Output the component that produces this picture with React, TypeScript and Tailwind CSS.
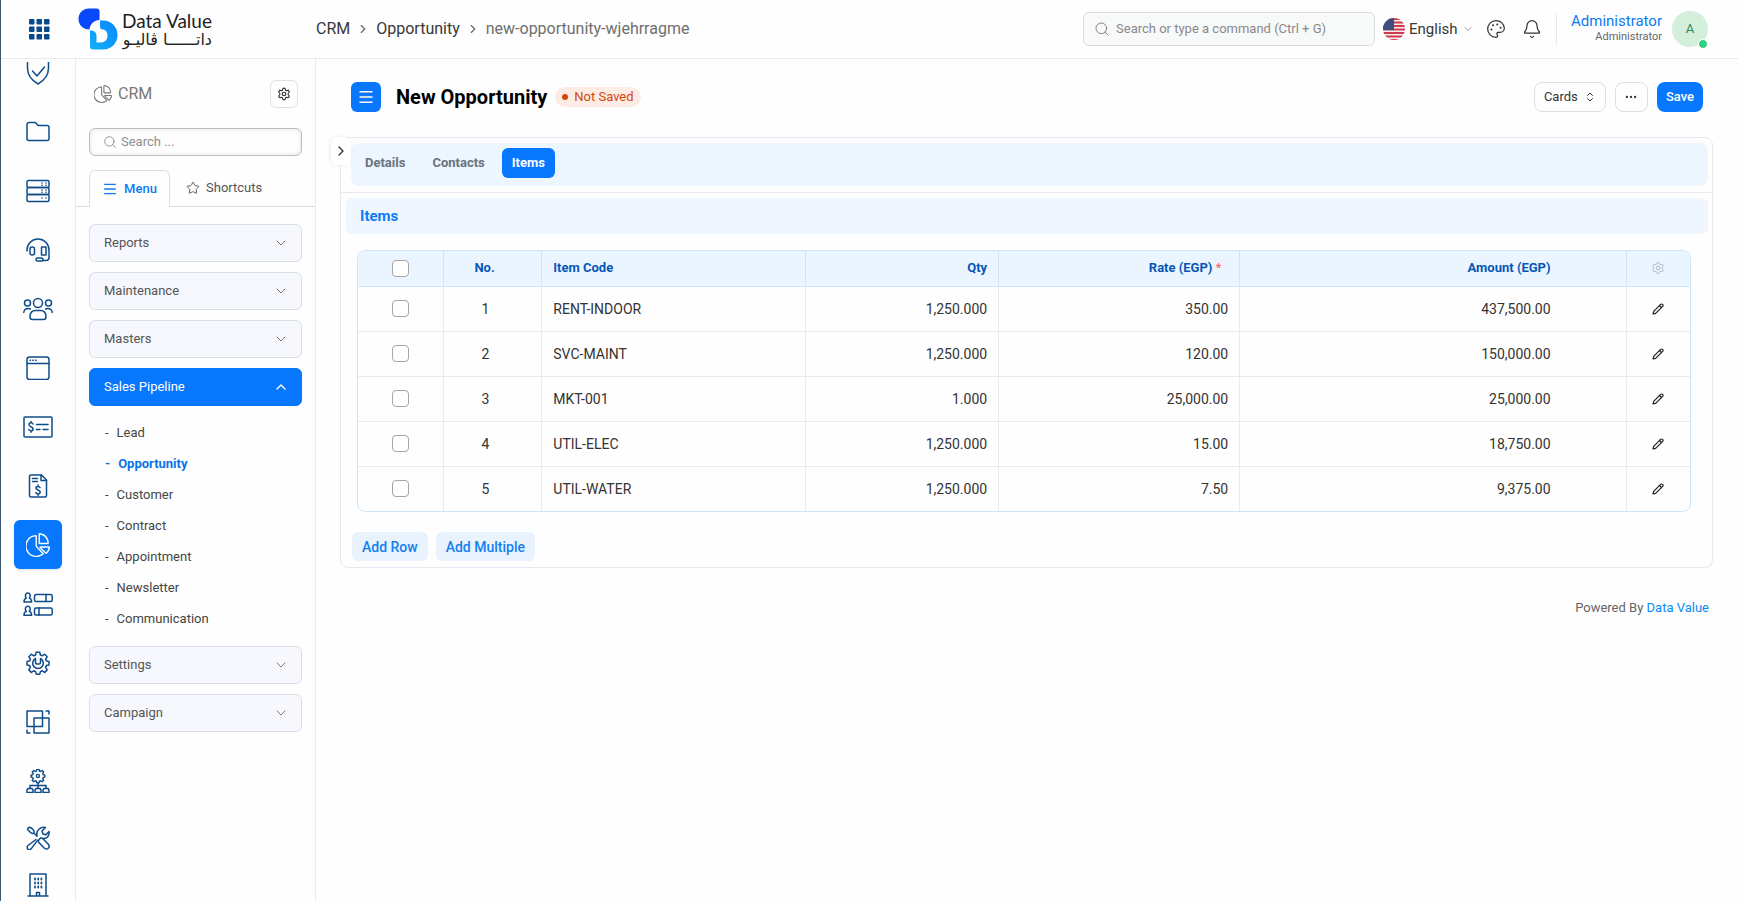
import React from "react";
import {
  Bell,
  ChevronDown,
  ChevronRight,
  ChevronUp,
  ChevronsUpDown,
  Ellipsis,
  Menu,
  Palette,
  Pencil,
  Search,
  Settings,
  Star,
} from "lucide-react";

interface IconProps {
  className?: string;
}

interface Item {
  no: number;
  code: string;
  qty: string;
  rate: string;
  amount: string;
}

interface RailIcon {
  label: string;
  icon: React.ReactNode;
  wide?: boolean;
  height?: string;
}

const items: Item[] = [
  { no: 1, code: "RENT-INDOOR", qty: "1,250.000", rate: "350.00", amount: "437,500.00" },
  { no: 2, code: "SVC-MAINT", qty: "1,250.000", rate: "120.00", amount: "150,000.00" },
  { no: 3, code: "MKT-001", qty: "1.000", rate: "25,000.00", amount: "25,000.00" },
  { no: 4, code: "UTIL-ELEC", qty: "1,250.000", rate: "15.00", amount: "18,750.00" },
  { no: 5, code: "UTIL-WATER", qty: "1,250.000", rate: "7.50", amount: "9,375.00" },
];

const pipelineLinks = ["Lead", "Opportunity", "Customer", "Contract", "Appointment", "Newsletter", "Communication"];

const railSvg = "fill-none stroke-current [stroke-linecap:round] [stroke-linejoin:round]";

const PieIcon: React.FC<IconProps> = ({ className = "size-6" }) => (
  <svg viewBox="0 0 24 24" strokeWidth="1.4" className={`${railSvg} ${className}`}>
    <path d="M9.6 2.6a10.4 10.4 0 1 0 7.6 18.2l-6.6-7.2a1.6 1.6 0 0 1-.4-1.1V3.2a.6.6 0 0 0-.6-.6Z" />
    <path d="M13.2 1.3v8.4c0 .5.3.8.8.8h7.6c.4 0 .7-.3.6-.7-.5-4.8-3.5-8.2-8.4-9-.3 0-.6.2-.6.5Z" />
    <path d="M14.6 14h8.3c.3 0 .5.3.5.6a9.5 9.5 0 0 1-2.9 5.5c-.2.2-.6.2-.8 0l-5.4-5.3c-.3-.3-.1-.8.3-.8Z" />
  </svg>
);

const GearShape = (
  <path d="M10.2 1.2h3.6l.6 2.8 1.8.8 2.5-1.6 2.5 2.5-1.6 2.5.8 1.8 2.6.4v3.6l-2.6.6-.8 1.8 1.6 2.5-2.5 2.5-2.5-1.6-1.8.8-.6 2.6h-3.6l-.6-2.6-1.8-.8-2.5 1.6-2.5-2.5 1.6-2.5-.8-1.8-2.6-.6v-3.6l2.6-.4.8-1.8-1.6-2.5 2.5-2.5 2.5 1.6 1.8-.8Z" />
);

const railIcons: RailIcon[] = [
  {
    label: "Quality",
    icon: (
      <>
        <path d="M1.5 0v7c0 8 4.5 12.5 10.5 16 6-3.5 10.5-8 10.5-16V0" />
        <path d="m6.5 10 4.5 5 7.5-9" />
      </>
    ),
  },
  { label: "Projects", icon: <path d="M1 18.500v-14A2 2 0 0 1 3 2.500h6.500L12 5.500h9a2 2 0 0 1 2 2v11a2 2 0 0 1-2 2H3a2 2 0 0 1-2-2Z" /> },
  {
    label: "Assets",
    icon: (
      <>
        <rect x="1" y="1.5" width="22" height="7" rx="1.5" />
        <rect x="1" y="8.5" width="22" height="7" rx="1.5" />
        <rect x="1" y="15.5" width="22" height="7" rx="1.5" />
        <path d="M16 4h.1M20 4h.1M16 6.300h.1M20 6.300h.1M16 11h.1M20 11h.1M16 13.300h.1M20 13.300h.1M16 19h.1M20 19h.1" />
      </>
    ),
  },
  {
    label: "Support",
    icon: (
      <>
        <path d="M1 13v-1a11 11 0 0 1 22 0v7.500a3 3 0 0 1-3 3h-3" />
        <rect x="4" y="9" width="4.5" height="8" rx="2" />
        <rect x="15.5" y="9" width="4.5" height="8" />
        <rect x="10" y="20" width="7" height="3" rx="1.5" />
      </>
    ),
  },
  {
    label: "HR",
    wide: true,
    icon: (
      <>
        <circle cx="15" cy="6" r="4.5" />
        <circle cx="4.5" cy="6" r="3" />
        <circle cx="25.5" cy="6" r="3" />
        <path d="M9.500 22.500c-1.500 0-2.500-1-2.500-2.500 0-4 2-6.500 5.500-6.500h5c3.500 0 5.500 2.500 5.500 6.500 0 1.500-1 2.500-2.500 2.500Z" />
        <path d="M.8 15.500c.2-2.500 2-4 4.500-4 .8 0 1.500.2 2 .5M29.200 15.500c-.2-2.500-2-4-4.500-4-.8 0-1.500.2-2 .5" />
      </>
    ),
  },
  {
    label: "Website",
    icon: (
      <>
        <rect x="1" y="1" width="22" height="22.5" rx="2.5" />
        <path d="M1 7.500h22M4 4.300h.5M6.800 4.300h.5M9.600 4.300h.5" />
      </>
    ),
  },
  {
    label: "Payments",
    wide: true,
    icon: (
      <>
        <rect x="1" y="2" width="28" height="20" rx="1" />
        <path d="M10 9c-.5-1-1.200-1.200-2-1.200-1.200 0-2 .7-2 1.800 0 2.600 4 1.600 4 4.300 0 1.200-.9 1.900-2 1.900-1 0-1.800-.4-2.200-1.300M8 6.500v1.300M8 15.800v1.400M13.500 9.500H25M13.500 14.500h3.500M20 14.500h5" />
      </>
    ),
  },
  {
    label: "Invoices",
    icon: (
      <>
        <path d="M3.500 21.500v-19a1.500 1.500 0 0 1 1.500-1.500h10.500l5 5v15.500a1.500 1.500 0 0 1-1.500 1.500H5a1.500 1.500 0 0 1-1.500-1.500Z" />
        <path d="M15 1v5.500h5.500M6.500 4.500h5M6.500 7.500h5" />
        <path d="M14 13.500c-.4-.8-1.100-1.100-2-1.100-1.200 0-2.100.6-2.100 1.700 0 2.400 4.300 1.400 4.300 4 0 1.100-1 1.800-2.200 1.800-1 0-1.800-.4-2.200-1.200M12 11v1.400M12 19.900v1.300" />
      </>
    ),
  },
  { label: "CRM", icon: null },
  {
    label: "Employees",
    wide: true,
    icon: (
      <>
        <path d="M3.300 6C1.500 4 2.500 1 4.800 1s3.300 3 1.500 5c1.500.5 2.300 2 2.300 4H1c0-2 .8-3.500 2.300-4Z" />
        <path d="M3.300 19.300c-1.800-2-.8-5 1.500-5s3.300 3 1.500 5c1.500.5 2.300 2 2.300 4H1c0-2 .8-3.500 2.300-4Z" />
        <rect x="11.5" y="2.5" width="17.7" height="7" rx="1.5" />
        <rect x="11.5" y="16" width="17.7" height="7" rx="1.5" />
        <path d="M23 2.500v7M16 16v7" />
      </>
    ),
  },
  {
    label: "Settings",
    icon: (
      <>
        {GearShape}
        <path d="M9.500 7.500a5.300 5.300 0 1 0 5 0v4a1.500 1.500 0 0 1-1.500 1.500h-2a1.500 1.500 0 0 1-1.500-1.500Z" />
      </>
    ),
  },
  {
    label: "Integrations",
    icon: (
      <>
        <path d="M1 1h15.500v15.500H1ZM8 8h15v15H8Z" />
        <path d="M20 1h3v3M1 20v3h3" />
      </>
    ),
  },
  {
    label: "Organization",
    icon: (
      <>
        <g transform="translate(4.500 -.5) scale(.62)" strokeWidth="2.3">
          {GearShape}
          <circle cx="12" cy="12" r="2.5" />
        </g>
        <path d="M12 14.500v5M4 19v-2.500h16V19" />
        <path d="M1 23.500v-2.500l1-1.500h4l1 1.500v2.500ZM9 23.500v-2.500l1-1.500h4l1 1.500v2.500ZM17 23.500v-2.500l1-1.500h4l1 1.500v2.500Z" />
      </>
    ),
  },
  {
    label: "Tools",
    height: "h-[45px]",
    icon: (
      <>
        <path d="M2 2.200c1.500-1.500 3-.8 4.500.8s2.300 3 1.300 4-2.500.3-4-1.300-3-2.300-1.800-3.500ZM7.800 7l3 3" />
        <path d="m10 13.500-8 6c-1.800 2-.5 4.500 1.500 4.200.8-.1 1.300-.6 2-1.300l6-8" />
        <path d="M13.500 13c1-1.200 2.500-1.200 3.500-.2l5.300 5.500c1 1.200 1 2.800 0 3.900s-2.700 1.100-3.800 0l-5.400-5.400c-.9-.9-.7-2.600.4-3.800Z" />
        <path d="M11 10c-1-4.500 2-9.500 8.500-8.500l-3.500 3.500 1 3 3 .8 3-3.300c.7 4-2 7.500-6 7" />
      </>
    ),
  },
  {
    label: "Buildings",
    height: "h-[29px]",
    icon: (
      <>
        <path d="M4 23V1h16v22M2 23h20M10.500 23v-3.500h3V23" />
        <path d="M9 5.500v1M12.200 5.500v1M15.400 5.500v1M9 9.500v1M12.200 9.500v1M15.400 9.500v1M9 13.500v1M12.200 13.500v1M15.400 13.500v1" strokeWidth="1.8" />
      </>
    ),
  },
];

const Logo: React.FC = () => (
  <a href="#" className="flex items-center gap-1 text-[#1f1f1f]">
    <svg viewBox="0 0 40 42" className="h-[42px] w-10">
      <defs>
        <linearGradient id="drop" x1="0" y1="1" x2="1" y2="0">
          <stop offset="0" stopColor="#12b0f8" />
          <stop offset="1" stopColor="#0a86ff" />
        </linearGradient>
      </defs>
      <path d="M11 .5h7.500a3 3 0 0 1 3 3V12c-5.500.3-9.500 4-10 9.500C5 21.500.5 17 .5 11S5 .5 11 .5Z" fill="#0847fb" />
      <path
        d="M22 12.500h3.500c8 0 14 6.500 14 14.500s-6 14.500-14 14.500H15a3 3 0 0 1-3-3V22.500c4 0 6.500 1.500 6.500 5.500v6.500H23c4 0 6.500-3 6.500-7s-2.500-6-5-6c-2 0-2.500-1.500-2.500-3.500Z"
        fill="url(#drop)"
      />
    </svg>
    <span className="flex flex-col pt-0.5 font-['Lato','Noto_Sans',sans-serif]">
      <span className="text-[19px] leading-5">Data Value</span>
      <span className="font-['DejaVu_Sans',sans-serif] text-base leading-[18px]" dir="rtl" lang="ar">
        داتــــــا ڤاليـو
      </span>
    </span>
  </a>
);

const Flag: React.FC = () => (
  <svg viewBox="0 0 22 22" className="size-[22px]">
    <clipPath id="round">
      <circle cx="11" cy="11" r="11" />
    </clipPath>
    <g clipPath="url(#round)">
      <rect width="22" height="22" fill="#f4f1f2" />
      <path d="M0 1h22M0 4.500h22M0 8h22M0 11.500h22M0 15h22M0 18.500h22M0 22h22" stroke="#cf3b4c" strokeWidth="1.8" />
      <rect width="11" height="12" fill="#3d4f7d" />
    </g>
  </svg>
);

const TopBar: React.FC = () => (
  <header className="mr-2 flex h-[59px] items-center border-b border-[#e9eaec] pr-[30px] pl-7">
    <button aria-label="Apps" className="mr-7">
      <svg viewBox="0 0 21 21" className="size-[21px] fill-[#0a4a8c]">
        {[0, 7.5, 15].map((y) => [0, 7.5, 15].map((x) => <rect key={`${x}-${y}`} x={x} y={y} width="5.5" height="5.5" rx="0.8" />))}
      </svg>
    </button>
    <Logo />
    <nav aria-label="Breadcrumb" className="ml-[104px] flex flex-1 items-center gap-1.5 text-base text-[#383838]">
      <a href="#">CRM</a>
      <ChevronRight className="size-3.5 text-[#666]" />
      <a href="#">Opportunity</a>
      <ChevronRight className="size-3.5 text-[#666]" />
      <span className="text-[#6f6f6f]">new-opportunity-wjehrragme</span>
    </nav>
    <label className="flex h-[34px] w-[292px] items-center gap-1.5 rounded-md border border-[#d9dcdf] bg-[#f8f9f9] px-2.5 text-[#7c7c7c]">
      <Search className="size-4" strokeWidth={1.4} />
      <input
        aria-label="Search"
        placeholder="Search or type a command (Ctrl + G)"
        className="flex-1 bg-transparent text-[13px] outline-none placeholder:text-[#8a8a8a]"
      />
    </label>
    <div className="ml-2 flex items-center gap-1">
      <Flag />
      <select aria-label="Language" className="appearance-none text-[15px] text-[#383838]">
        <option>English</option>
      </select>
      <ChevronDown className="size-3 text-[#777]" strokeWidth={1.5} />
    </div>
    <button aria-label="Theme" className="ml-3 text-[#333]">
      <Palette className="size-5" strokeWidth={1.5} />
    </button>
    <button aria-label="Notifications" className="ml-4 text-[#333]">
      <Bell className="size-5" strokeWidth={1.5} />
    </button>
    <div className="ml-3.5 flex items-center gap-2.5">
      <div className="border-l border-[#e5e7ea] pl-3.5 text-right">
        <a href="#" className="block text-[15px] leading-4 text-[#0b7cf5]">
          Administrator
        </a>
        <span className="block text-[11px] leading-4 text-[#666]">Administrator</span>
      </div>
      <div className="relative flex size-9 items-center justify-center rounded-full bg-[#d5efdd] text-[13px] text-[#2e8b57]">
        A
        <span className="absolute right-0 -bottom-0.5 size-2.5 rounded-full border border-white bg-[#35cf83]" />
      </div>
    </div>
  </header>
);

const Rail: React.FC = () => (
  <nav aria-label="Modules" className="flex w-[75px] shrink-0 flex-col overflow-hidden border-r border-[#e9eaec] pt-[3px] text-[#0f4c8a]">
    <div className="min-h-0 flex-1 overflow-hidden">
      <div className="-mt-3.5 flex flex-col items-center gap-2.5">
        {railIcons.map(({ label, icon, wide, height = "h-[49px]" }) =>
          icon ? (
            <a key={label} href="#" aria-label={label} className={`flex w-12 items-center justify-center ${height}`}>
              <svg viewBox={wide ? "0 0 30 24" : "0 0 24 24"} strokeWidth="1.5" className={`h-6 ${wide ? "w-[30px]" : "w-6"} ${railSvg}`}>
                {icon}
              </svg>
            </a>
          ) : (
            <a key={label} href="#" aria-label={label} className="flex h-[49px] w-12 items-center justify-center rounded-md bg-[#0777fd] text-white shadow">
              <PieIcon />
            </a>
          ),
        )}
      </div>
    </div>
  </nav>
);

const Section: React.FC<{ title: string; open?: boolean }> = ({ title, open }) => (
  <button
    aria-expanded={!!open}
    className={`flex h-[38px] w-full items-center justify-between rounded-md border pr-3 pl-3.5 text-[13px] ${
      open ? "border-[#0777fd] bg-[#0777fd] text-white" : "border-[#d9dee8] bg-[#f6f8fd] text-[#555]"
    }`}
  >
    {title}
    {open ? <ChevronUp className="size-4" /> : <ChevronDown className="size-4 text-[#777]" strokeWidth={1.5} />}
  </button>
);

const Sidebar: React.FC = () => (
  <aside className="w-[240px] shrink-0 border-r border-[#e9eaec]">
    <div className="flex items-center gap-1.5 pt-[21px] pr-[17px] pl-[18px] text-[#777]">
      <PieIcon className="size-[18px]" />
      <h2 className="flex-1 text-base">CRM</h2>
      <button aria-label="Sidebar settings" className="flex size-7 items-center justify-center rounded-md border border-[#dfe1e8] text-[#333]">
        <Settings className="size-3.5" />
      </button>
    </div>
    <div className="px-[13px] pt-5">
      <label className="flex h-7 items-center gap-1 rounded-md border border-[#bfbfbf] px-[13px] text-[#8a8a8a] shadow-[inset_0_0_4px_rgba(0,0,0,0.12)]">
        <Search className="size-3.5" strokeWidth={1.5} />
        <input aria-label="Search menu" placeholder="Search ..." className="min-w-0 flex-1 bg-transparent text-[13px] outline-none placeholder:text-[#8f8f8f]" />
      </label>
    </div>
    <div role="tablist" className="mt-3.5 flex border-b border-[#d9dde2] pl-[13px] text-[13px]">
      <button role="tab" aria-selected="true" className="-mb-px flex h-[37px] w-[81px] items-center justify-center gap-1.5 rounded-t-md border border-b-0 border-[#d9dde2] bg-[#fefefe] font-medium text-[#0b7cf5]">
        <Menu className="size-4" />
        Menu
      </button>
      <button role="tab" aria-selected="false" className="flex items-center gap-1.5 px-4 text-[#555]">
        <Star className="size-3.5" strokeWidth={1.6} />
        Shortcuts
      </button>
    </div>
    <div className="flex flex-col gap-2.5 px-[13px] pt-[17px]">
      <Section title="Reports" />
      <Section title="Maintenance" />
      <Section title="Masters" />
      <Section title="Sales Pipeline" open />
      <ul className="pt-px pb-0.5 pl-4 text-[13px]">
        {pipelineLinks.map((link) => (
          <li key={link} className="flex h-[31px] items-center">
            <a href="#" className={`flex gap-2 ${link === "Opportunity" ? "font-bold text-[#0b74e5]" : "text-[#444]"}`}>
              <span>-</span>
              {link}
            </a>
          </li>
        ))}
      </ul>
      <Section title="Settings" />
      <Section title="Campaign" />
    </div>
  </aside>
);

const Check: React.FC<{ label: string }> = ({ label }) => (
  <input type="checkbox" aria-label={label} className="mx-auto block size-[17px] appearance-none rounded border border-[#a5a5a5] bg-white checked:bg-[#0777fd]" />
);

const ItemsTable: React.FC = () => (
  <div className="mr-[21px] ml-4 overflow-hidden rounded-lg border border-[#cfe5fb]">
    <table className="w-full table-fixed text-sm text-[#333]">
      <colgroup>
        <col className="w-[6.4%]" />
        <col className="w-[7.4%]" />
        <col className="w-[19.8%]" />
        <col className="w-[14.5%]" />
        <col className="w-[18.1%]" />
        <col />
        <col className="w-[4.8%]" />
      </colgroup>
      <thead>
        <tr className="h-[35px] border-b border-[#cfe5fb] bg-[#ebf5ff] text-[13px] text-[#0757b5] [&>th+th]:border-l [&>th+th]:border-[#cfe5fb]">
          <th>
            <Check label="Select all" />
          </th>
          <th className="pr-4">No.</th>
          <th className="px-[11px] text-left">Item Code</th>
          <th className="px-[11px] text-right">Qty</th>
          <th className="px-[18px] text-right">
            Rate (EGP) <span className="font-normal text-[#ff5a5f]">*</span>
          </th>
          <th className="pr-[75px] text-right">Amount (EGP)</th>
          <th>
            <button aria-label="Configure columns" className="mx-auto block text-[#aab4be]">
              <Settings className="size-3.5" strokeWidth={1.5} />
            </button>
          </th>
        </tr>
      </thead>
      <tbody>
        {items.map((item) => (
          <tr key={item.no} className="h-[45px] border-b border-[#e8ebee] last:border-b-0 [&>td+td]:border-l [&>td+td]:border-[#e8ebee]">
            <td>
              <Check label={`Select row ${item.no}`} />
            </td>
            <td className="pr-3.5 text-center">{item.no}</td>
            <td className="px-[11px]">{item.code}</td>
            <td className="px-[11px] text-right">{item.qty}</td>
            <td className="px-[11px] text-right">{item.rate}</td>
            <td className="pr-[75px] text-right">{item.amount}</td>
            <td>
              <button aria-label={`Edit row ${item.no}`} className="mx-auto block text-[#222]">
                <Pencil className="size-3" strokeWidth={2.4} />
              </button>
            </td>
          </tr>
        ))}
      </tbody>
    </table>
  </div>
);

const formTabs = ["Details", "Contacts", "Items"];

const App: React.FC = () => {
  return (
    <div className="flex h-screen flex-col overflow-hidden border-l border-[#3f5a70] bg-[#fefefe] font-['Roboto','Noto_Sans',sans-serif]">
      <TopBar />
      <div className="flex min-h-0 flex-1">
        <Rail />
        <Sidebar />
        <main className="min-w-0 flex-1 pr-[33px] pl-6">
          <div className="flex items-center pt-[23px] pr-2.5 pl-[11px]">
            <button aria-label="Toggle sidebar" className="flex size-[30px] items-center justify-center rounded-md bg-[#0777fd] text-white">
              <Menu className="size-[18px]" strokeWidth={1.8} />
            </button>
            <h1 className="ml-[15px] text-xl font-bold text-black">New Opportunity</h1>
            <span className="ml-2 flex h-5 items-center gap-1.5 rounded-full bg-[#fdece4] px-[7px] text-[13px] text-[#d0480f]">
              <span className="size-1.5 rounded-full bg-[#d0480f]" />
              Not Saved
            </span>
            <div className="ml-auto flex items-center gap-[9px] text-[13px] text-[#333]">
              <div className="flex h-[30px] items-center gap-1.5 rounded-lg border border-[#dcdee6] px-[9px]">
                <select aria-label="View" className="appearance-none">
                  <option>Cards</option>
                </select>
                <ChevronsUpDown className="size-3" />
              </div>
              <button aria-label="More actions" className="flex h-[30px] w-[33px] items-center justify-center rounded-lg border border-[#dcdee6]">
                <Ellipsis className="size-3.5" />
              </button>
              <button className="h-[30px] rounded-lg bg-[#0777fd] px-[9px] font-medium text-white">Save</button>
            </div>
          </div>

          <section className="relative mt-[25px] rounded-lg border border-[#e7e9ec]">
            <button aria-label="Expand" className="absolute -top-px -left-2.5 flex h-7 w-5 items-center justify-center rounded-md bg-white text-[#333] shadow-[-1px_0_4px_rgba(0,0,0,0.08)]">
              <ChevronRight className="size-4" />
            </button>
            <div className="border-b border-[#e7e9ec] pt-[5px] pr-1 pb-1.5 pl-2.5">
              <div role="tablist" className="flex h-[43px] items-start gap-[7px] rounded-lg bg-[#edf5fe] px-1 pt-[5px] text-[13px] font-bold">
                {formTabs.map((tab) => (
                  <button
                    key={tab}
                    role="tab"
                    aria-selected={tab === "Items"}
                    className={`h-[30px] rounded-md px-2.5 ${tab === "Items" ? "bg-[#0777fd] text-white" : "text-[#69727d]"}`}
                  >
                    {tab}
                  </button>
                ))}
              </div>
            </div>
            <h2 className="mt-[5px] mr-1 ml-[5px] flex h-9 items-center rounded-md bg-[#f0f6fe] px-3.5 text-[15px] font-bold text-[#0b7cf5]">Items</h2>
            <div className="mt-4">
              <ItemsTable />
            </div>
            <div className="mt-5 mb-1.5 ml-[11px] flex gap-2 text-sm font-medium text-[#1480ee]">
              <button className="h-[29px] rounded-md bg-[#e8f3fe] px-2.5">Add Row</button>
              <button className="h-[29px] rounded-md bg-[#e8f3fe] px-2.5">Add Multiple</button>
            </div>
          </section>

          <footer className="mt-[30px] pr-1 text-right text-[13px] text-[#666]">
            Powered By{" "}
            <a href="#" className="text-[#0b8bf5]">
              Data Value
            </a>
          </footer>
        </main>
      </div>
    </div>
  );
};

export default App;
